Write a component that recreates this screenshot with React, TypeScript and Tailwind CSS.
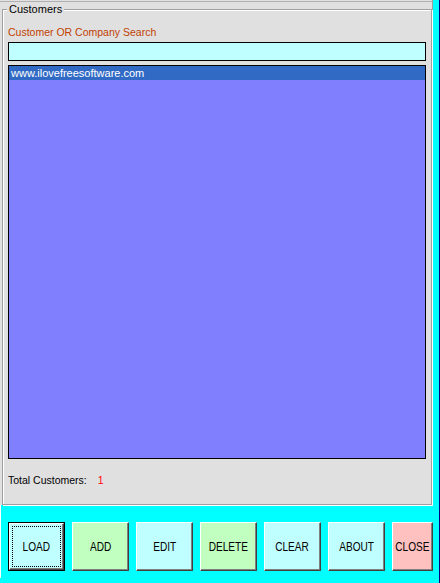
import React from "react";

const customers = ["www.ilovefreesoftware.com"];

const buttons = [
  { label: "LOAD", bg: "bg-[#c0ffff]", width: "w-[57px]", isDefault: true },
  { label: "ADD", bg: "bg-[#c0ffc0]", width: "w-[57px]" },
  { label: "EDIT", bg: "bg-[#c0ffff]", width: "w-[57px]" },
  { label: "DELETE", bg: "bg-[#c0ffc0]", width: "w-[57px]" },
  { label: "CLEAR", bg: "bg-[#c0ffff]", width: "w-[57px]" },
  { label: "ABOUT", bg: "bg-[#c0ffff]", width: "w-[57px]" },
  { label: "CLOSE", bg: "bg-[#ffc0c0]", width: "w-[41px]" },
];

function FormButton({
  label,
  bg,
  width,
  isDefault,
}: {
  label: string;
  bg: string;
  width: string;
  isDefault?: boolean;
}) {
  return (
    <button
      className={`relative flex h-[49px] ${width} shrink-0 items-center justify-center ${bg} ${
        isDefault ? "border border-black" : ""
      }`}
    >
      <div className="absolute inset-0 border-t border-l border-t-white border-l-white border-r border-b border-r-[#404040] border-b-[#404040] shadow-[inset_-1px_-1px_0_#808080]" />
      {isDefault && (
        <div className="absolute inset-[3px] border border-dotted border-black" />
      )}
      <span className="relative inline-block scale-x-[0.84] whitespace-nowrap text-[12px] leading-none text-black">
        {label}
      </span>
    </button>
  );
}

export default function App() {
  return (
    <div
      className="flex h-[583px] w-[440px] flex-col border-r border-[#000080] bg-[#00ffff]"
      style={{ fontFamily: '"Liberation Sans", Arial, sans-serif' }}
    >
      {/* customers panel */}
      <div className="h-[505px] w-[433px] border-r border-[#a0a0a0] bg-[#e0e0e0]">
        <div className="mt-px h-px bg-[#b0b0b0]" />
        <div className="relative ml-[2px] mt-[7px] flex h-[496px] w-[430px] flex-col border border-[#a0a0a0] pl-[5px] pt-[16px] shadow-[inset_1px_1px_0_#fff,1px_1px_0_#fff]">
          <span className="absolute left-[4px] top-[-8px] bg-[#e0e0e0] px-[2px] text-[11px] leading-[14px] text-black">
            Customers
          </span>

          <label className="block h-[13px] text-[10.5px] leading-[13px] text-[#c04000]">
            Customer OR Company Search
          </label>
          <input
            className="mt-[3px] h-[19px] w-[418px] border border-black bg-[#c0ffff] px-1 text-[11px] outline-none"
            defaultValue=""
          />

          <div className="mt-[4px] h-[394px] w-[418px] border border-black bg-[#8080ff]">
            {customers.map((c) => (
              <div
                key={c}
                className="h-[14px] bg-[#316ac5] pl-[2px] text-[11px] leading-[14px] text-white"
              >
                {c}
              </div>
            ))}
          </div>

          <div className="mt-[15px] flex h-[13px] items-center text-[10.5px] leading-[13px] text-black">
            <span>Total Customers:</span>
            <span className="ml-[11px] text-[#ff0000]">1</span>
          </div>
        </div>
      </div>

      {/* command buttons */}
      <div className="h-[73px] w-[433px] overflow-hidden border-l border-white">
        <div className="ml-[7px] mt-[17px] flex gap-[7px]">
          {buttons.map((b) => (
            <FormButton key={b.label} {...b} />
          ))}
        </div>
      </div>
    </div>
  );
}
